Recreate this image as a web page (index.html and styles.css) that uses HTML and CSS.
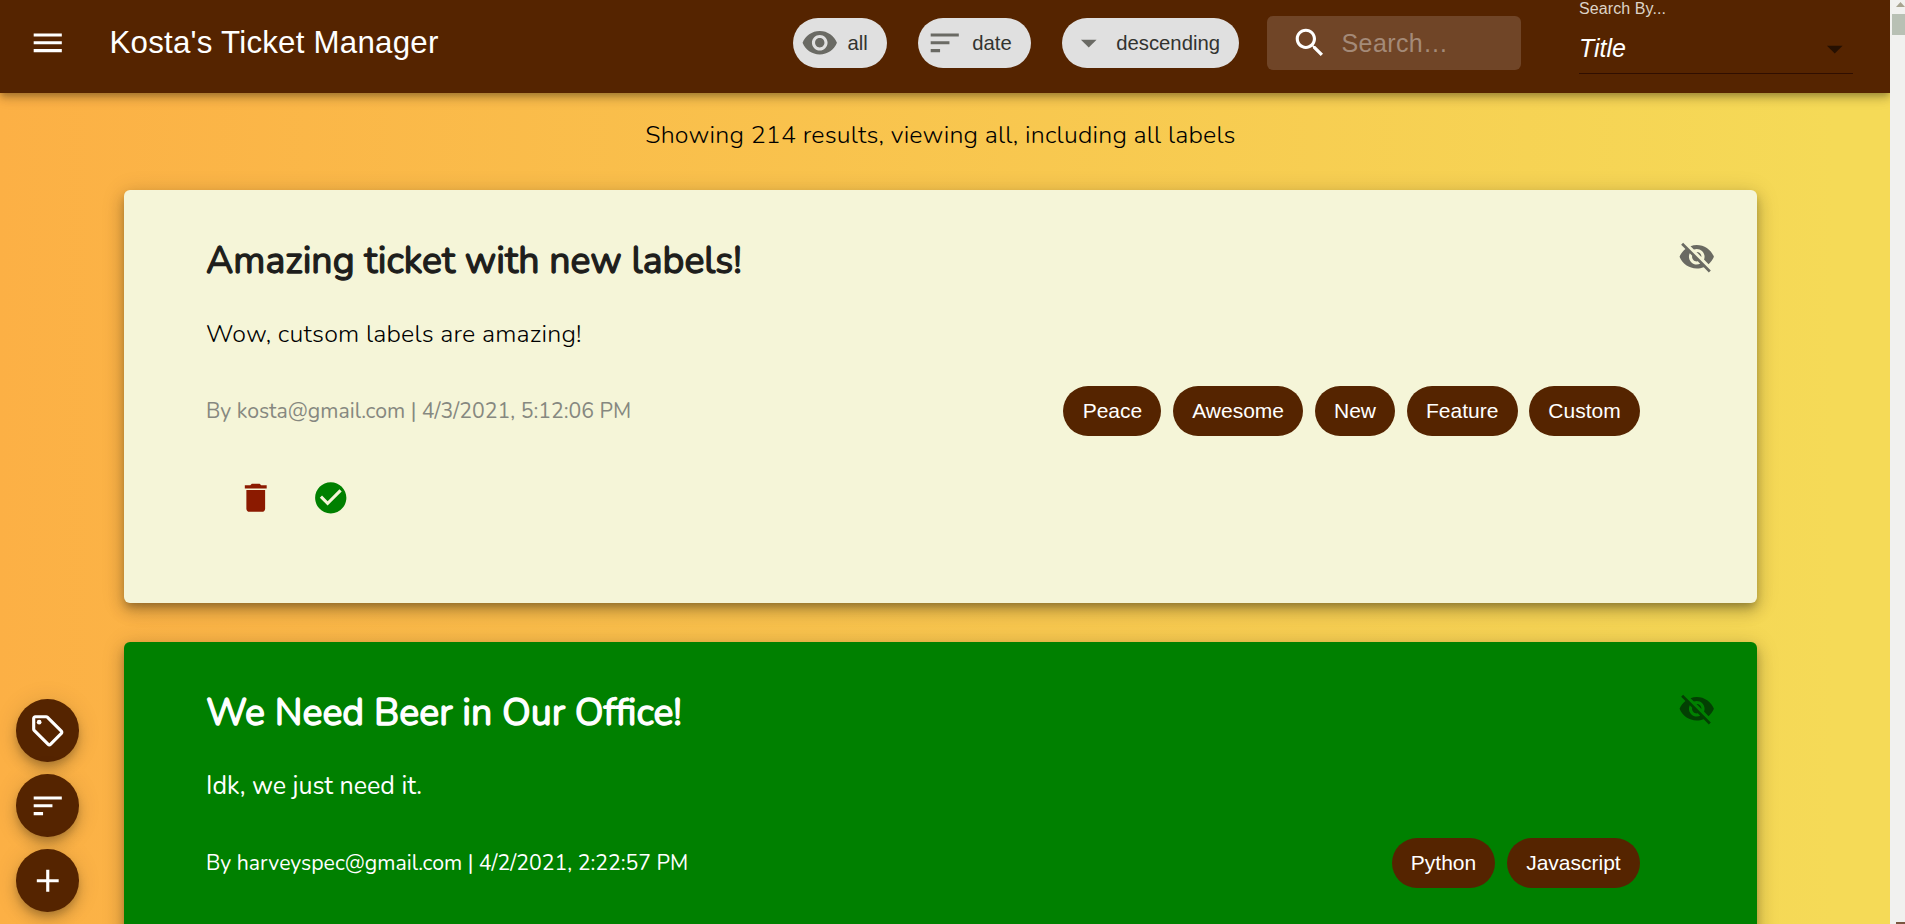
FILE: index.html
```html
<!DOCTYPE html>
<html lang="en">
<head>
<meta charset="utf-8">
<title>Kosta's Ticket Manager</title>
<link rel="stylesheet" href="styles.css">
</head>
<body>
<svg class="sprite" width="0" height="0">
  <symbol id="sort" viewBox="0 0 24 24"><path d="M3 18h6v-2H3v2zM3 6v2h18V6H3zm0 7h12v-2H3v2z"/></symbol>
  <symbol id="hidden" viewBox="0 0 24 24"><path d="M12 7c2.76 0 5 2.24 5 5 0 .65-.13 1.26-.36 1.83l2.92 2.92c1.51-1.26 2.7-2.89 3.43-4.75-1.73-4.39-6-7.5-11-7.5-1.4 0-2.74.25-3.98.7l2.16 2.16C10.74 7.13 11.35 7 12 7zM2 4.27l2.28 2.28.46.46C3.08 8.3 1.78 10.02 1 12c1.73 4.39 6 7.5 11 7.5 1.55 0 3.03-.3 4.38-.84l.42.42L19.73 22 21 20.73 3.27 3 2 4.27zM7.53 9.8l1.55 1.55c-.05.21-.08.43-.08.65 0 1.66 1.34 3 3 3 .22 0 .44-.03.65-.08l1.55 1.55c-.67.33-1.41.53-2.2.53-2.76 0-5-2.24-5-5 0-.79.2-1.53.53-2.2zm4.31-.78l3.15 3.15.02-.16c0-1.66-1.34-3-3-3l-.17.01z"/></symbol>
</svg>
<div class="window">
  <div class="page">
    <header class="appbar">
      <button class="menu" aria-label="menu"><svg class="icon" viewBox="0 0 24 24"><path d="M3 18h18v-2H3v2zm0-5h18v-2H3v2zm0-7v2h18V6H3z"/></svg></button>
      <h1 class="brand">Kosta's Ticket Manager</h1>
      <div class="filters">
        <span class="chip"><svg class="icon" viewBox="0 0 24 24"><path d="M12 4.5C7 4.5 2.73 7.61 1 12c1.73 4.39 6 7.5 11 7.5s9.27-3.11 11-7.5c-1.73-4.39-6-7.5-11-7.5zM12 17c-2.76 0-5-2.24-5-5s2.24-5 5-5 5 2.24 5 5-2.24 5-5 5zm0-8c-1.66 0-3 1.34-3 3s1.34 3 3 3 3-1.34 3-3-1.34-3-3-3z"/></svg>all</span>
        <span class="chip"><svg class="icon"><use href="#sort"/></svg>date</span>
        <span class="chip"><svg class="icon" viewBox="0 0 24 24"><path d="M7 10l5 5 5-5z"/></svg>descending</span>
      </div>
      <div class="search"><svg class="icon" viewBox="0 0 24 24"><path d="M15.5 14h-.79l-.28-.27C15.41 12.59 16 11.11 16 9.5 16 5.91 13.09 3 9.5 3S3 5.91 3 9.5 5.91 16 9.5 16c1.61 0 3.09-.59 4.23-1.57l.27.28v.79l5 4.99L20.49 19l-4.99-5zm-6 0C7.01 14 5 11.99 5 9.5S7.01 5 9.5 5 14 7.01 14 9.5 11.99 14 9.5 14z"/></svg><span>Search…</span></div>
      <div class="select">
        <span class="select-label">Search By...</span>
        <div class="select-value"><em>Title</em><svg class="icon" viewBox="0 0 24 24"><path d="M7 10l5 5 5-5z"/></svg></div>
      </div>
    </header>
    <main>
      <p class="summary">Showing 214 results, viewing all, including all labels</p>
      <article class="card">
        <div class="card-head"><h2>Amazing ticket with new labels!</h2><svg class="icon hide"><use href="#hidden"/></svg></div>
        <p class="text">Wow, cutsom labels are amazing!</p>
        <div class="foot"><span class="meta">By kosta@gmail.com | 4/3/2021, 5:12:06 PM</span>
          <div class="labels"><span>Peace</span><span>Awesome</span><span>New</span><span>Feature</span><span>Custom</span></div></div>
        <div class="actions">
          <svg class="icon delete" viewBox="0 0 24 24"><path d="M6 19c0 1.1.9 2 2 2h8c1.1 0 2-.9 2-2V7H6v12zM19 4h-3.5l-1-1h-5l-1 1H5v2h14V4z"/></svg>
          <svg class="icon done" viewBox="0 0 24 24"><path d="M12 2C6.48 2 2 6.48 2 12s4.48 10 10 10 10-4.48 10-10S17.52 2 12 2zm-2 15l-5-5 1.41-1.41L10 14.17l7.59-7.59L19 8l-9 9z"/></svg>
        </div>
      </article>
      <article class="card completed">
        <div class="card-head"><h2>We Need Beer in Our Office!</h2><svg class="icon hide"><use href="#hidden"/></svg></div>
        <p class="text">Idk, we just need it.</p>
        <div class="foot"><span class="meta">By harveyspec@gmail.com | 4/2/2021, 2:22:57 PM</span>
          <div class="labels"><span>Python</span><span>Javascript</span></div></div>
      </article>
    </main>
  </div>
  <div class="scrollbar"><i class="up"></i><i class="thumb"></i><i class="down"></i></div>
</div>
<nav class="fabs">
  <button class="fab" aria-label="labels"><svg class="icon" viewBox="0 0 24 24"><path d="M21.41 11.58l-9-9C12.05 2.22 11.55 2 11 2H4c-1.1 0-2 .9-2 2v7c0 .55.22 1.05.59 1.42l9 9c.36.36.86.58 1.41.58s1.05-.22 1.41-.59l7-7c.37-.36.59-.86.59-1.41s-.23-1.06-.59-1.42zM13 20.01L4 11V4h7v-.01l9 9-7 7.02z"/><circle cx="6.5" cy="6.5" r="1.5"/></svg></button>
  <button class="fab" aria-label="sort"><svg class="icon"><use href="#sort"/></svg></button>
  <button class="fab" aria-label="add"><svg class="icon" viewBox="0 0 24 24"><path d="M19 13h-6v6h-2v-6H5v-2h6V5h2v6h6v2z"/></svg></button>
</nav>
</body>
</html>
```
FILE: styles.css
```css
* { box-sizing: border-box; }
body, h1, h2, p { margin: 0; }
body { height: 924px; overflow: hidden; font-family: "Liberation Sans", Arial, sans-serif; }
button { border: 0; padding: 0; background: none; color: inherit; }
.sprite { display: block; position: absolute; }
.icon { width: 37.5px; height: 37.5px; flex: none; fill: currentColor; display: block; }

.window { display: flex; height: 924px; }
.page {
  width: 1890px; height: 924px; overflow: hidden;
  display: flex; flex-direction: column;
  background: linear-gradient(to right, #fcb045, #f5da57 97%);
}

.appbar {
  height: 93px; flex: none; position: relative;
  display: flex; align-items: flex-start;
  background: #552400; color: #fff;
  box-shadow: 0 3px 6px -1px rgba(0,0,0,.2), 0 6px 8px rgba(0,0,0,.14), 0 2px 16px rgba(0,0,0,.12);
}
.menu { margin: 24px 0 0 29px; }
.brand { margin: 25px 0 0 43px; font-size: 31.25px; font-weight: 400; line-height: 36px; letter-spacing: .24px; }
.filters { display: flex; gap: 31px; margin: 18px 28px 0 auto; }
.chip {
  height: 50px; display: flex; align-items: center; gap: 9px;
  padding: 0 19px 0 8px; border-radius: 25px;
  background: #e0e0e0; color: #32332f; font-size: 20.3px;
}
.chip .icon { color: #6a6a64; }
.search {
  width: 254px; height: 54px; margin-top: 16px; padding-left: 24px;
  display: flex; align-items: center; gap: 13px;
  border-radius: 6px; background: #704527; font-size: 25px;
}
.search span { color: #a48a78; letter-spacing: .4px; }
.select { width: 274px; margin: 0 37px 0 58px; }
.select-label { display: block; height: 18px; line-height: 17px; font-size: 16px; letter-spacing: .1px; color: #ddd3c7; }
.select-value {
  height: 56px; display: flex; justify-content: space-between; align-items: center;
  padding-top: 6px; border-bottom: 1.5px solid #300e00; font-size: 25px;
}
.select-value .icon { color: #261001; }

main { padding: 0 133px 0 124px; font-family: Nunito, "Noto Sans", sans-serif; }
.summary {
  height: 97px; padding-top: 25px; line-height: 34px; text-align: center;
  font-size: 25px; font-weight: 300; letter-spacing: .19px; color: #000;
}
.card {
  height: 413px; margin-bottom: 39px; padding: 0 0 0 82px; border-radius: 6px;
  background: #f5f5d8; color: #1e1e1c;
  box-shadow: 0 5px 8px -2px rgba(0,0,0,.26), 0 8px 16px 1px rgba(0,0,0,.16), 0 3px 22px 3px rgba(0,0,0,.11);
}
.card-head { display: flex; justify-content: space-between; height: 120px; }
.card h2 {
  margin-top: 46px; font: 400 37.5px/50px Nunito, Lato, sans-serif;
  -webkit-text-stroke: 1.3px currentColor;
}
.hide { margin: 48px 42px 0 0; color: #6a6a62; }
.text { height: 76px; line-height: 48px; font-size: 25px; font-weight: 300; letter-spacing: .19px; color: #000; }
.foot { display: flex; justify-content: space-between; align-items: center; height: 50px; padding-right: 117px; }
.meta { font-size: 21.25px; font-weight: 400; color: #868880; }
.labels { display: flex; gap: 11.4px; }
.labels span {
  height: 50px; padding: 0 19.3px; border-radius: 25px; line-height: 50px;
  background: #552400; color: #fff; font-family: "Liberation Sans", Arial, sans-serif; font-size: 21px;
}
.actions { display: flex; gap: 37.5px; padding: 42.5px 0 0 31px; }
.delete { color: #8b1a00; }
.done { color: #008000; }

.completed { background: #008000; color: #fff; }
.completed .text { color: #fff; font-weight: 400; letter-spacing: 0; }
.completed .meta { color: #fff; }
.completed .hide { color: #034003; }

.fabs { position: fixed; left: 16px; top: 699px; display: flex; flex-direction: column; gap: 12.5px; }
.fab {
  width: 62.5px; height: 62.5px; border-radius: 50%;
  display: flex; align-items: center; justify-content: center;
  background: #552400; color: #fff;
  box-shadow: 0 5px 8px -2px rgba(0,0,0,.2), 0 9px 16px rgba(0,0,0,.14), 0 2px 24px rgba(0,0,0,.12);
}

.scrollbar { width: 15px; background: #f1f1ef; display: flex; flex-direction: column; align-items: flex-end; overflow: hidden; }
.up { width: 9px; height: 5px; margin-top: 2px; background: #a8a490; clip-path: polygon(50% 0, 100% 100%, 0 100%); }
.thumb { width: 13px; height: 21px; margin-top: 7px; background: #b8c0b4; }
.down { width: 9px; height: 2px; margin-top: auto; background: #7b5640; }
```
